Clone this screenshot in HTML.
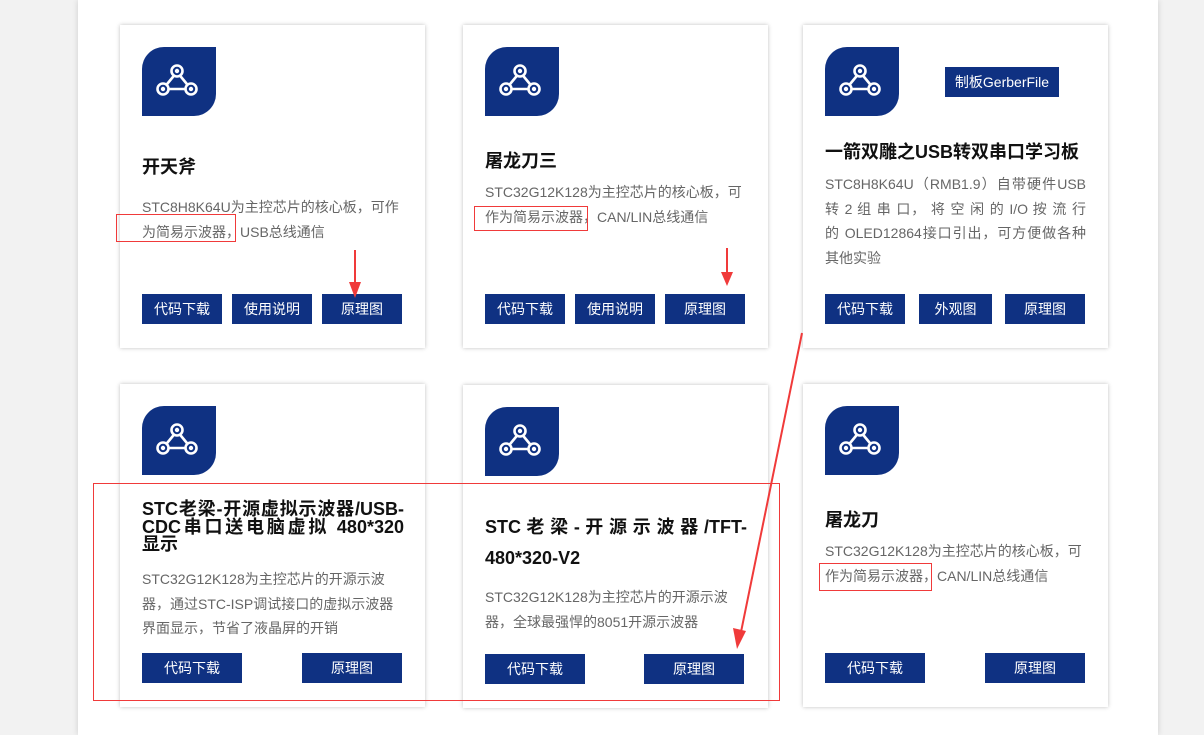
<!DOCTYPE html>
<html><head><meta charset="utf-8"><style>
*{margin:0;padding:0;box-sizing:border-box}
body{width:1204px;height:735px;background:#f2f2f2;position:relative;overflow:hidden;font-family:"Liberation Sans","Noto Sans CJK SC",sans-serif}
.wrap{position:absolute;left:78px;top:0;width:1080px;height:735px;background:#fff;box-shadow:0 0 6px rgba(0,0,0,.15)}
.card{position:absolute;width:305px;height:323px;background:#fff;box-shadow:0 0 4px rgba(0,0,0,.25)}
.ic{position:absolute;width:74px;height:69px;background:#0f3182;border-radius:22px 0 22px 0}
.ic svg{position:absolute;left:0;top:0}
.t{position:absolute;font-weight:bold;font-size:18px;color:#111;line-height:24px;white-space:nowrap}
.d{position:absolute;font-size:14px;color:#666;line-height:24.5px;white-space:nowrap}
.j{text-align:justify;text-align-last:justify;display:block}
.b{position:absolute;height:30px;background:#0f3182;color:#fff;font-size:14px;text-align:center;line-height:30px}
.r{position:absolute;border:1px solid #f03a3a}
</style></head><body>
<div class="wrap"></div>

<div class="card" style="left:120px;top:25px"></div>
<div class="card" style="left:463px;top:25px"></div>
<div class="card" style="left:803px;top:25px"></div>
<div class="card" style="left:120px;top:384px"></div>
<div class="card" style="left:463px;top:385px"></div>
<div class="card" style="left:803px;top:384px"></div>

<svg width="0" height="0" style="position:absolute"><defs><g id="net" fill="none" stroke="#fff" stroke-width="2.6"><line x1="35" y1="25" x2="21" y2="42"/><line x1="35" y1="25" x2="49" y2="42"/><line x1="21" y1="42" x2="49" y2="42"/><circle cx="35" cy="24" r="5.5" fill="#0f3182"/><circle cx="21" cy="42" r="5.5" fill="#0f3182"/><circle cx="49" cy="42" r="5.5" fill="#0f3182"/><circle cx="35" cy="24" r="2.2" fill="#fff" stroke="none"/><circle cx="21" cy="42" r="2.2" fill="#fff" stroke="none"/><circle cx="49" cy="42" r="2.2" fill="#fff" stroke="none"/></g></defs></svg>

<div class="ic" style="left:142px;top:47px"><svg width="74" height="69"><use href="#net"/></svg></div>
<div class="ic" style="left:485px;top:47px"><svg width="74" height="69"><use href="#net"/></svg></div>
<div class="ic" style="left:825px;top:47px"><svg width="74" height="69"><use href="#net"/></svg></div>
<div class="ic" style="left:142px;top:406px"><svg width="74" height="69"><use href="#net"/></svg></div>
<div class="ic" style="left:485px;top:407px"><svg width="74" height="69"><use href="#net"/></svg></div>
<div class="ic" style="left:825px;top:406px"><svg width="74" height="69"><use href="#net"/></svg></div>

<div class="b" style="left:945px;top:67px;width:114px">制板GerberFile</div>

<div class="t" style="left:142px;top:155px">开天斧</div>
<div class="d" style="left:142px;top:195px">STC8H8K64U为主控芯片的核心板，可作<br>为简易示波器，USB总线通信</div>
<div class="b" style="left:142px;top:294px;width:80px">代码下载</div>
<div class="b" style="left:232px;top:294px;width:80px">使用说明</div>
<div class="b" style="left:322px;top:294px;width:80px">原理图</div>

<div class="t" style="left:485px;top:149px">屠龙刀三</div>
<div class="d" style="left:485px;top:180px">STC32G12K128为主控芯片的核心板，可<br>作为简易示波器，CAN/LIN总线通信</div>
<div class="b" style="left:485px;top:294px;width:80px">代码下载</div>
<div class="b" style="left:575px;top:294px;width:80px">使用说明</div>
<div class="b" style="left:665px;top:294px;width:80px">原理图</div>

<div class="t" style="left:825px;top:140px">一箭双雕之USB转双串口学习板</div>
<div class="d" style="left:825px;top:172px;width:261px">
<span class="j">STC8H8K64U（RMB1.9）自带硬件USB</span>
<span class="j">转 2 组 串 口， 将 空 闲 的 I/O 按 流 行</span>
<span class="j">的 OLED12864接口引出，可方便做各种</span>
<span style="display:block">其他实验</span></div>
<div class="b" style="left:825px;top:294px;width:80px">代码下载</div>
<div class="b" style="left:919px;top:294px;width:73px">外观图</div>
<div class="b" style="left:1005px;top:294px;width:80px">原理图</div>

<div class="t" style="left:142px;top:501px;width:262px;line-height:17.5px">
<span class="j">STC老梁-开源虚拟示波器/USB-</span>
<span class="j">CDC串口送电脑虚拟 480*320</span>
<span style="display:block">显示</span></div>
<div class="d" style="left:142px;top:567px">STC32G12K128为主控芯片的开源示波<br>器，通过STC-ISP调试接口的虚拟示波器<br>界面显示，节省了液晶屏的开销</div>
<div class="b" style="left:142px;top:653px;width:100px">代码下载</div>
<div class="b" style="left:302px;top:653px;width:100px">原理图</div>

<div class="t" style="left:485px;top:512px;width:262px;line-height:31px">
<span class="j">STC 老 梁 - 开 源 示 波 器 /TFT-</span>
<span style="display:block">480*320-V2</span></div>
<div class="d" style="left:485px;top:585px">STC32G12K128为主控芯片的开源示波<br>器，全球最强悍的8051开源示波器</div>
<div class="b" style="left:485px;top:654px;width:100px">代码下载</div>
<div class="b" style="left:644px;top:654px;width:100px">原理图</div>

<div class="t" style="left:825px;top:508px">屠龙刀</div>
<div class="d" style="left:825px;top:539px">STC32G12K128为主控芯片的核心板，可<br>作为简易示波器，CAN/LIN总线通信</div>
<div class="b" style="left:825px;top:653px;width:100px">代码下载</div>
<div class="b" style="left:985px;top:653px;width:100px">原理图</div>

<div class="r" style="left:116px;top:214px;width:120px;height:28px"></div>
<div class="r" style="left:474px;top:206px;width:114px;height:25px"></div>
<div class="r" style="left:819px;top:563px;width:113px;height:28px"></div>
<div class="r" style="left:93px;top:483px;width:687px;height:218px"></div>
<svg style="position:absolute;left:0;top:0" width="1204" height="735">
<g fill="#f03a3a" stroke="#f03a3a">
<line x1="355" y1="250" x2="355" y2="286" stroke-width="2"/><polygon points="349,282 361,282 355,298" stroke="none"/>
<line x1="727" y1="248" x2="727" y2="276" stroke-width="2"/><polygon points="721,272 733,272 727,286" stroke="none"/>
<line x1="802" y1="333" x2="741" y2="632" stroke-width="2"/><polygon points="733,628 746,631 737,649" stroke="none"/>
</g></svg>
</body></html>
